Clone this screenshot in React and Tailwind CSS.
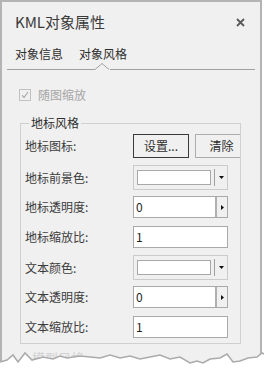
import React from "react";

const font = { fontFamily: '"Noto Sans CJK SC", "Noto Sans", sans-serif' };

const ColorCombo = () => (
  <div className="w-[95px] h-[25px] border border-[#cbcbcb] bg-[#f0f0f0] flex items-center pl-[3px]">
    <div className="w-[74px] h-[15px] border border-[#a8a8a8] bg-white" />
    <div className="ml-[3px] w-px h-[17px] bg-[#a0a0a0]" />
    <div className="flex-1 flex justify-center">
      <svg width="5" height="3" viewBox="0 0 5 3">
        <polygon points="0,0 5,0 2.5,3" fill="#111" />
      </svg>
    </div>
  </div>
);

const SpinBox = ({ value }) => (
  <div className="w-[95px] h-[22px] border border-[#a9a9a9] bg-white flex">
    <div className="flex-1 pl-[2px] text-[12px] leading-[20px] text-[#1e1e1e]">{value}</div>
    <div className="w-[12px] border-l-2 border-[#b0b0b0] bg-[#f0f0f0] flex items-center justify-center">
      <svg width="3" height="5" viewBox="0 0 3 5">
        <polygon points="0,0 3,2.5 0,5" fill="#111" />
      </svg>
    </div>
  </div>
);

const TextBox = ({ value }) => (
  <div className="w-[95px] h-[22px] border border-[#a9a9a9] bg-white pl-[2px] text-[12px] leading-[20px] text-[#1e1e1e]">
    {value}
  </div>
);

const Row = ({ label, className, children }) => (
  <div className={`flex items-center ${className}`}>
    <div className="w-[112px] shrink-0 pl-[4px] text-[12px] text-[#3c3c3c]">{label}</div>
    {children}
  </div>
);

const tear = [
  [0, 362], [7, 360], [13, 355], [18, 362], [25, 353], [32, 360], [43, 357], [53, 359],
  [60, 356], [67, 358], [80, 356], [90, 357], [100, 358], [110, 355], [120, 358], [130, 356],
  [140, 359], [150, 357], [160, 355], [170, 359], [180, 357], [190, 363], [197, 361],
  [203, 363], [210, 359], [220, 358], [227, 354], [233, 362], [240, 361], [248, 358],
  [257, 357], [262, 353], [264, 354],
].map(([x, y]) => [x, y - 340]);

const App = () => {
  const jag = tear.map((p) => p.join(",")).join(" ");
  return (
    <div className="relative w-[264px] h-[374px] bg-white overflow-hidden" style={font}>
      <div className="w-[262px] h-[374px] border-x-2 border-t-2 border-[#b4b4b4] bg-[#f0f0f0] flex flex-col">
        {/* title */}
        <div className="mt-[10px] h-[20px] pl-[13px] pr-[15px] flex items-center justify-between">
          <span className="text-[15px] leading-[20px] text-[#3a3a3a]">KML对象属性</span>
          <svg width="9" height="9" viewBox="0 0 9 9">
            <path d="M1 1L8 8M8 1L1 8" stroke="#5a5a5a" strokeWidth="1.8" />
          </svg>
        </div>

        {/* tabs */}
        <div className="mt-[13px] pl-[13px] flex gap-[16px] text-[12px] leading-[18px] text-[#2e2e2e]">
          <span>对象信息</span>
          <span>对象风格</span>
        </div>
        <div className="relative mt-[6px] ml-[5px] w-[248px] h-px bg-[#a0a0a0]">
          <svg className="absolute left-[88px] top-[-6px]" width="15" height="7" viewBox="0 0 15 7">
            <rect x="0" y="6" width="15" height="1" fill="#f0f0f0" />
            <polyline points="0,6.5 7,0.5 14,6.5" fill="none" stroke="#a0a0a0" strokeWidth="1" />
          </svg>
        </div>

        {/* checkbox */}
        <div className="mt-[18px] pl-[17px] flex items-center gap-[7px]">
          <div className="w-[12px] h-[12px] border border-[#c2c2c2] flex items-center justify-center">
            <svg width="8" height="8" viewBox="0 0 8 8">
              <path d="M1 4.2L3 6.5L7 1" fill="none" stroke="#ababab" strokeWidth="1.2" />
            </svg>
          </div>
          <span className="text-[12px] leading-[14px] text-[#a6a6a6]">随图缩放</span>
        </div>

        {/* group */}
        <fieldset className="mt-[14px] ml-[18px] w-[221px] min-w-0 border border-[#d0d0d0] pb-[5px]">
          <legend className="ml-[8px] px-[2px] text-[12px] leading-[14px] text-[#2e2e2e]">地标风格</legend>
          <div className="overflow-hidden">
            <Row label="地标图标:" className="mt-[4px] h-[24px]">
              <button className="w-[56px] h-[24px] shrink-0 border border-[#3a3a3a] text-[12px] text-[#2e2e2e]">
                设置...
              </button>
              <button className="ml-[6px] w-[53px] h-[24px] shrink-0 border border-[#adadad] text-[12px] text-[#2e2e2e]">
                清除
              </button>
            </Row>
            <Row label="地标前景色:" className="mt-[7px]">
              <ColorCombo />
            </Row>
            <Row label="地标透明度:" className="mt-[6px]">
              <SpinBox value="0" />
            </Row>
            <Row label="地标缩放比:" className="mt-[8px]">
              <TextBox value="1" />
            </Row>
            <Row label="文本颜色:" className="mt-[7px]">
              <ColorCombo />
            </Row>
            <Row label="文本透明度:" className="mt-[6px]">
              <SpinBox value="0" />
            </Row>
            <Row label="文本缩放比:" className="mt-[8px]">
              <TextBox value="1" />
            </Row>
          </div>
        </fieldset>

        <div className="mt-[6px] ml-[30px] text-[13px] leading-[16px] text-[#d2d2d2]">模型风格</div>
      </div>

      {/* torn bottom edge */}
      <svg className="absolute left-0 bottom-0" width="264" height="34" viewBox="0 0 264 34">
        <polygon points={`${jag} 264,34 0,34`} fill="#ffffff" />
        <polyline points={jag} fill="none" stroke="#ababab" strokeWidth="1.6" />
      </svg>
    </div>
  );
};

export default App;
